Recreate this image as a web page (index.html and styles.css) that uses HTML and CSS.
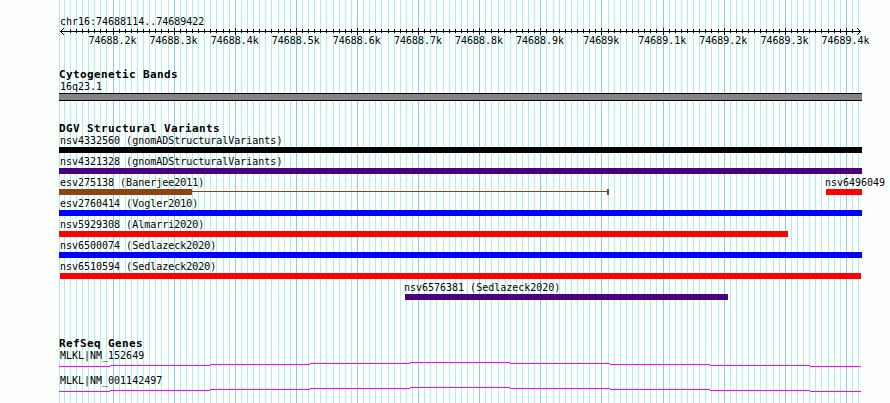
FILE: index.html
```
<!DOCTYPE html>
<html lang="en">
<head>
  <meta charset="UTF-8">
  <title>chr16:74688114..74689422</title>
  <link rel="stylesheet" href="styles.css">
</head>
<body>

<div class="browser">
  <svg class="grid" width="890" height="403" shape-rendering="crispEdges">
    <path id="gridMinor" class="grid-minor"/>
    <path id="gridMajor" class="grid-major"/>
  </svg>

  <!-- Ruler -->
  <div class="ruler">
    <div class="label">chr16:74688114..74689422</div>
    <svg class="scale" width="890" height="7" shape-rendering="crispEdges">
      <path class="axis" d="M60 3.5H861"/>
      <path id="ticks" class="axis"/>
      <path class="axis" d="M61 2.5h1M62 1.5h1M63 .5h1M61 4.5h1M62 5.5h1M63 6.5h1"/>
      <path class="axis" d="M859 2.5h1M858 1.5h1M857 .5h1M859 4.5h1M858 5.5h1M857 6.5h1"/>
    </svg>
    <div class="numbers">
      <span>74688.2k</span><span>74688.3k</span><span>74688.4k</span><span>74688.5k</span><span>74688.6k</span><span>74688.7k</span><span>74688.8k</span><span>74688.9k</span><span>74689k</span><span>74689.1k</span><span>74689.2k</span><span>74689.3k</span><span>74689.4k</span>
    </div>
  </div>

  <!-- Cytogenetic bands -->
  <div class="track bands">
    <h2>Cytogenetic Bands</h2>
    <div class="label">16q23.1</div>
    <div class="band"></div>
  </div>

  <!-- Structural variants -->
  <div class="track variants">
    <h2>DGV Structural Variants</h2>
    <div class="row">
      <div class="feature"><div class="label">nsv4332560 (gnomADStructuralVariants)</div><div class="bar black"></div></div>
    </div>
    <div class="row">
      <div class="feature"><div class="label">nsv4321328 (gnomADStructuralVariants)</div><div class="bar purple"></div></div>
    </div>
    <div class="row">
      <div class="feature" style="width: 550px">
        <div class="label">esv275138 (Banerjee2011)</div>
        <div class="gapped"><div class="bar brown" style="width: 133px"></div><div class="link"></div><div class="bar brown" style="width: 2px"></div></div>
      </div>
      <div class="feature" style="width: 36px; margin-left: 217px"><div class="label flush">nsv6496049</div><div class="bar red"></div></div>
    </div>
    <div class="row">
      <div class="feature"><div class="label">esv2760414 (Vogler2010)</div><div class="bar blue"></div></div>
    </div>
    <div class="row">
      <div class="feature"><div class="label">nsv5929308 (Almarri2020)</div><div class="bar red" style="width: 729px"></div></div>
    </div>
    <div class="row">
      <div class="feature"><div class="label">nsv6500074 (Sedlazeck2020)</div><div class="bar blue"></div></div>
    </div>
    <div class="row">
      <div class="feature"><div class="label">nsv6510594 (Sedlazeck2020)</div><div class="bar red" style="width: 801px; margin-left: 1px"></div></div>
    </div>
    <div class="row">
      <div class="feature" style="width: 323px; margin-left: 346px"><div class="label flush">nsv6576381 (Sedlazeck2020)</div><div class="bar purple"></div></div>
    </div>
  </div>

  <!-- Genes -->
  <div class="track genes">
    <h2>RefSeq Genes</h2>
    <div class="gene">
      <div class="label">MLKL|NM_152649</div>
      <svg class="intron" width="803" height="5" shape-rendering="crispEdges">
        <path d="M0 4.5H51M51 3.5H151M151 2.5H251M251 1.5H351M351 .5H451M451 1.5H551M551 2.5H651M651 3.5H751M751 4.5H802"/>
      </svg>
    </div>
    <div class="gene">
      <div class="label">MLKL|NM_001142497</div>
      <svg class="intron" width="803" height="5" shape-rendering="crispEdges">
        <path d="M0 4.5H51M51 3.5H151M151 2.5H251M251 1.5H351M351 .5H451M451 1.5H551M551 2.5H651M651 3.5H751M751 4.5H802"/>
      </svg>
    </div>
  </div>
</div>

<script src="script.js"></script>
</body>
</html>
```

FILE: styles.css
```
body {
  margin: 0;
  background: #fdfffc;
  color: #000;
  font-family: 'DejaVu Sans Mono', monospace;
  font-size: 10px;
}

.browser {
  position: relative;
  width: 890px;
  height: 403px;
  overflow: hidden;
}

.grid {
  position: absolute;
  top: 0;
  left: 0;
  z-index: -1;
}

.grid-minor {
  stroke: #afeeee;
}

.grid-major {
  stroke: #87ceeb;
}

.label {
  height: 12px;
  padding-left: 1px;
  line-height: 12px;
  letter-spacing: -0.01px;
  white-space: pre;
}

.label.flush {
  padding-left: 0;
  margin-left: -1px;
}

h2 {
  margin: 0;
  height: 13px;
  font-size: 11px;
  line-height: 13px;
  letter-spacing: 0.378px;
  white-space: pre;
}

/* ruler */

.ruler {
  height: 68px;
  padding-top: 16px;
  box-sizing: border-box;
}

.ruler .label {
  padding-left: 60px;
}

.scale {
  display: block;
}

.axis {
  stroke: #000;
}

.numbers {
  display: grid;
  grid-template-columns: repeat(13, 61.08px);
  padding-left: 82px;
  line-height: 12px;
  letter-spacing: -0.02px;
  text-align: center;
}

/* tracks */

.track {
  width: 803px;
  margin-left: 59px;
}

.bands {
  height: 54px;
}

.band {
  height: 6px;
  border-top: 1px solid #000;
  border-bottom: 1px solid #000;
  background: #878285;
}

.variants {
  height: 215px;
}

.row {
  display: flex;
  height: 21px;
}

.feature {
  width: 803px;
}

.bar {
  height: 6px;
}

.gapped {
  display: flex;
}

.link {
  flex: 1;
  height: 1px;
  margin-top: 2px;
  background: #8b4513;
}

.black {
  background: #000;
}

.purple {
  background: #4b0082;
}

.brown {
  background: #8b4513;
}

.blue {
  background: #00f;
}

.red {
  background: #f00;
}

.gene {
  height: 25px;
}

.intron {
  display: block;
  stroke: #f0f;
}
```

FILE: script.js
```
const start = 74688114;
const end = 74689422;
const scale = 800 / (end - start + 1);

let minor = 'M59.5 0V403';
let major = '';
let ticks = '';

for (let pos = 74688120; pos <= end; pos += 10) {
  const x = Math.round(60 + (pos - start) * scale) + 0.5;
  if (pos % 100 === 0) {
    major += `M${x} 0V403`;
    ticks += `M${x} 0V7`;
  } else {
    minor += `M${x} 0V403`;
    // keep the arrowheads at both ends clear
    if (x > 66 && x < 856) {
      ticks += `M${x} 1V5`;
    }
  }
}

document.getElementById('gridMinor').setAttribute('d', minor);
document.getElementById('gridMajor').setAttribute('d', major);
document.getElementById('ticks').setAttribute('d', ticks);
```
